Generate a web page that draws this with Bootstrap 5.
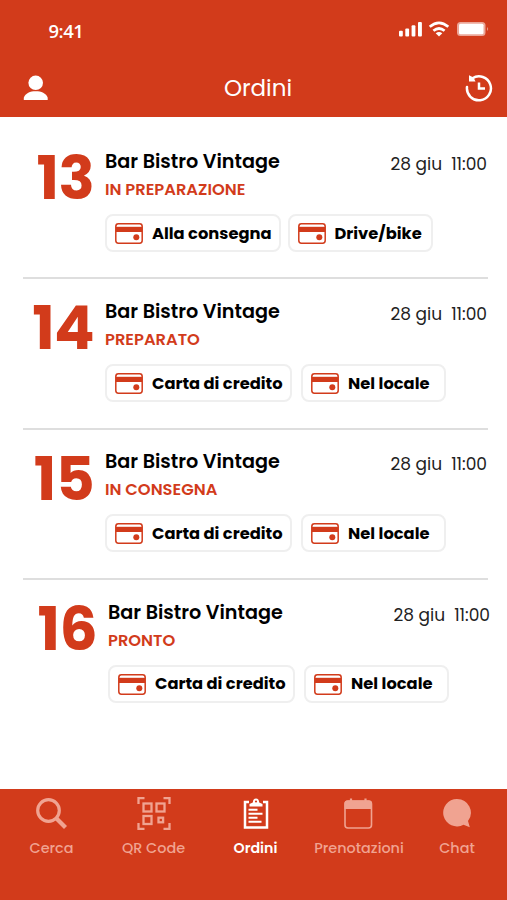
<!DOCTYPE html>
<html lang="it">
<head>
<meta charset="utf-8">
<meta name="viewport" content="width=device-width, initial-scale=1">
<title>Ordini</title>
<link href="https://cdn.jsdelivr.net/npm/bootstrap@5.3.0/dist/css/bootstrap.min.css" rel="stylesheet">
<style>
:root{--brand:#d23b1b}
body{font-family:Poppins,Inter,"Liberation Sans",sans-serif;color:#000;height:900px;overflow:hidden;background:#fff}
svg{display:block;flex:none}
.app-top{background:var(--brand);height:117px}
.status-bar{height:58px;padding:4px 18px 0 48.5px}
.clock{font:600 18.5px/1 "Open Sans",Inter,sans-serif;letter-spacing:-.5px}
.title-bar{height:59px;padding:0 14px 0 23px}
.app-title{font-size:23px;line-height:1;padding:2px 0 0 2px}
.order-list{padding:12.3px 19px 0 23px}
.order{height:150.2px;border-bottom:2px solid #dedede;padding-left:1px}
.order:last-child{border-color:transparent;padding-left:4px;margin-right:-3px}
.order-no{width:81px;padding:21px 11px 0 0;font-weight:700;font-size:60px;line-height:56px;letter-spacing:-.7px;color:var(--brand);text-align:right;white-space:nowrap}
.order-body{padding-top:18.8px}
.venue{font-size:19.2px;line-height:28px;font-weight:600}
.state{font-size:16.3px;line-height:28px;font-weight:600;color:var(--brand);margin-top:-4px}
.when{font-size:17px;line-height:32px;color:#222;white-space:pre;padding-right:1px}
.chips{margin-top:10px;gap:9.5px}
.chips.tight{gap:7px}
.chip{height:38px;border:2px solid #efefef;border-radius:8px;padding:1px 7px 0 8px;gap:9px;font-size:16.3px;font-weight:700;white-space:nowrap}
.chip-text{padding-top:1px}
.chip-short{width:145px}
.app-tabs{background:var(--brand);height:111px;padding:8px 0 0;color:#f0a391}
.app-tabs a{color:inherit;text-decoration:none;font-size:14.4px;font-weight:500;line-height:20px}
.app-tabs a.active{color:#fff;font-weight:600;font-size:14.2px}
.app-tabs svg{margin-bottom:7px}
.tab-a{width:103px}.tab-b{width:101px}.tab-c{width:103px}.tab-d{width:104px}.tab-e{width:92px}
</style>
<script src="https://cdn.jsdelivr.net/npm/bootstrap@5.3.0/dist/js/bootstrap.bundle.min.js"></script>
</head>
<body class="d-flex flex-column">
<svg width="0" height="0" class="position-absolute"><defs>
<symbol id="card-icon" viewBox="0 0 28 21"><rect x=".8" y=".8" width="26.4" height="19.4" rx="2.6" fill="#fff" stroke="#d23b1b" stroke-width="1.5"/><path d="M1 3.800h26v5.200H1z" fill="#d23b1b"/><circle cx="21.300" cy="14.300" r="3" fill="#d23b1b"/></symbol>
</defs></svg>
<header class="app-top text-white">
  <div class="status-bar d-flex align-items-center justify-content-between">
    <span class="clock">9:41</span>
    <svg width="91" height="20" viewBox="398 20.500 91 20" fill="#fff"><rect x="399" y="30.300" width="3.800" height="5.700" rx="1"/><rect x="405.300" y="28" width="3.800" height="8" rx="1"/><rect x="411.600" y="24.700" width="3.800" height="11.300" rx="1"/><rect x="418" y="21.500" width="3.900" height="14.500" rx="1"/><g fill="none" stroke="#fff" stroke-width="2.700"><path d="M429.700 26.300Q439 18.300 448.300 26.300"/><path d="M433.400 30.300Q439 25.700 444.600 30.300"/></g><path d="M435.700 32.800Q439 30.200 442.300 32.800L439 36z"/><rect x="457" y="21.500" width="28.500" height="14" rx="3.500" opacity=".55"/><rect x="459" y="23.300" width="24.500" height="10.500" rx="1.500"/><path d="M487 26.500q2.400 2 0 4z" opacity=".45"/></svg>
  </div>
  <div class="title-bar d-flex align-items-center justify-content-between">
    <svg width="26" height="26" viewBox="0 0 26 26" fill="#fff"><circle cx="12.700" cy="7.800" r="7.300"/><path d="M.8 25v-2.300C2.500 18.200 7 16.300 12.700 16.300S23 18.200 24.700 22.700V25z"/></svg>
    <span class="app-title">Ordini</span>
    <svg width="28" height="28" viewBox="0 0 28 28" fill="none" stroke="#fff" stroke-width="2.500"><path d="M2 13A12 12 0 1 0 7.500 4.200" stroke-linecap="round"/><path d="M4 1.200v6.300h6.500l-2-4z" fill="#fff" stroke="none"/><path d="M14 8.500v6h6"/></svg>
  </div>
</header>
<main class="order-list flex-grow-1">
  <article class="order d-flex">
    <div class="order-no">13</div>
    <div class="order-body flex-grow-1">
      <div class="d-flex justify-content-between"><h2 class="venue m-0">Bar Bistro Vintage</h2><time class="when">28 giu  11:00</time></div>
      <div class="state">IN PREPARAZIONE</div>
      <div class="chips tight d-flex"><span class="chip d-flex align-items-center"><svg width="28" height="21"><use href="#card-icon"/></svg><span class="chip-text">Alla consegna</span></span><span class="chip chip-short d-flex align-items-center"><svg width="28" height="21"><use href="#card-icon"/></svg><span class="chip-text">Drive/bike</span></span></div>
    </div>
  </article>
  <article class="order d-flex">
    <div class="order-no">14</div>
    <div class="order-body flex-grow-1">
      <div class="d-flex justify-content-between"><h2 class="venue m-0">Bar Bistro Vintage</h2><time class="when">28 giu  11:00</time></div>
      <div class="state">PREPARATO</div>
      <div class="chips d-flex"><span class="chip d-flex align-items-center"><svg width="28" height="21"><use href="#card-icon"/></svg><span class="chip-text">Carta di credito</span></span><span class="chip chip-short d-flex align-items-center"><svg width="28" height="21"><use href="#card-icon"/></svg><span class="chip-text">Nel locale</span></span></div>
    </div>
  </article>
  <article class="order d-flex">
    <div class="order-no">15</div>
    <div class="order-body flex-grow-1">
      <div class="d-flex justify-content-between"><h2 class="venue m-0">Bar Bistro Vintage</h2><time class="when">28 giu  11:00</time></div>
      <div class="state">IN CONSEGNA</div>
      <div class="chips d-flex"><span class="chip d-flex align-items-center"><svg width="28" height="21"><use href="#card-icon"/></svg><span class="chip-text">Carta di credito</span></span><span class="chip chip-short d-flex align-items-center"><svg width="28" height="21"><use href="#card-icon"/></svg><span class="chip-text">Nel locale</span></span></div>
    </div>
  </article>
  <article class="order d-flex">
    <div class="order-no">16</div>
    <div class="order-body flex-grow-1">
      <div class="d-flex justify-content-between"><h2 class="venue m-0">Bar Bistro Vintage</h2><time class="when">28 giu  11:00</time></div>
      <div class="state">PRONTO</div>
      <div class="chips d-flex"><span class="chip d-flex align-items-center"><svg width="28" height="21"><use href="#card-icon"/></svg><span class="chip-text">Carta di credito</span></span><span class="chip chip-short d-flex align-items-center"><svg width="28" height="21"><use href="#card-icon"/></svg><span class="chip-text">Nel locale</span></span></div>
    </div>
  </article>
</main>
<nav class="app-tabs d-flex">
  <a href="#" class="tab-a d-flex flex-column align-items-center"><svg width="34" height="34" viewBox="0 0 34 34" fill="none" stroke="currentColor"><circle cx="13.500" cy="13.500" r="10.800" stroke-width="3.200"/><path d="M21.500 21.500l9 9" stroke-width="4.200"/></svg>Cerca</a>
  <a href="#" class="tab-b d-flex flex-column align-items-center"><svg width="34" height="34" viewBox="0 0 34 34" fill="none" stroke="currentColor" stroke-width="2.300"><path d="M1.500 7V1.200H7.500M26.500 1.200h6V7M1.500 26v5.800h6M32.500 26v5.800h-6"/><rect x="6.500" y="6.500" width="8" height="8"/><rect x="19.500" y="6.500" width="8" height="8"/><rect x="6.500" y="19" width="8" height="8"/><rect x="21.500" y="20.700" width="4.600" height="4.600"/></svg>QR Code</a>
  <a href="#" class="tab-c active d-flex flex-column align-items-center"><svg width="34" height="34" viewBox="0 0 34 34" fill="none" stroke="currentColor" stroke-width="2"><path d="M10 5H6v25.500h22V5h-4" stroke-width="2.500"/><path d="M10.500 9.500V7l3.300-1.500C14 2.800 15 1.500 17 1.500s3 1.300 3.200 4L23.500 7v2.500z" fill="currentColor" stroke="none"/><circle cx="17" cy="4.500" r="1.100" fill="#d23b1b" stroke="none"/><path d="M9.500 12.700h9M9.500 16.700h14M9.500 20.700h9M9.500 24.700h13"/></svg>Ordini</a>
  <a href="#" class="tab-d d-flex flex-column align-items-center"><svg width="34" height="34" viewBox="0 0 34 34" fill="none" stroke="currentColor" stroke-width="1.600"><rect x="3" y="4" width="26.500" height="27" rx="3"/><path d="M2.500 6.500Q2.500 3.500 5.500 3.500h21.500Q30 3.500 30 6.500V12H2.500z" fill="currentColor" stroke="none"/><path d="M9 1.500V5M23.500 1.500V5" stroke-width="2.200"/></svg>Prenotazioni</a>
  <a href="#" class="tab-e d-flex flex-column align-items-center"><svg width="34" height="34" viewBox="0 0 34 34" fill="currentColor"><path d="M17 2a13.700 13.700 0 1 0 6.500 25.700L29.800 30.300 28 24A13.700 13.700 0 0 0 17 2z"/></svg>Chat</a>
</nav>
</body>
</html>
